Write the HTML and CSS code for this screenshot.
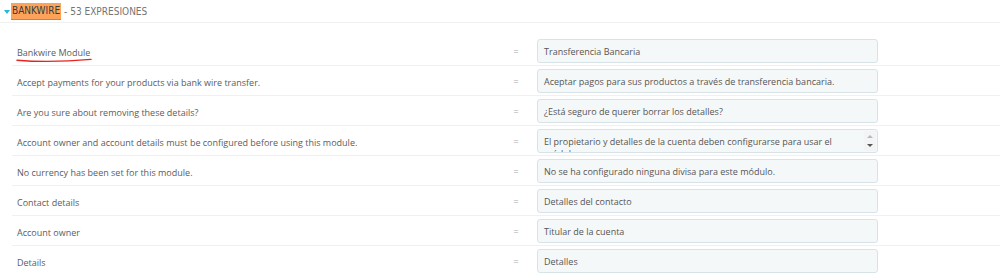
FILE: index.html
```html
<!DOCTYPE html>
<html lang="es">
<head>
<meta charset="utf-8">
<title>Traducciones</title>
<link rel="stylesheet" href="styles.css">
</head>
<body>
<div class="panel">
  <div class="head">
    <span class="caret"></span>
    <a class="mod"><span class="hl">BANKWIRE</span></a>
    <span class="count">- 53 EXPRESIONES</span>
  </div>
  <div class="list">
    <div class="row">
      <div class="label marked">Bankwire Module
        <svg class="scribble" width="80" height="6" viewBox="0 0 80 6"><path d="M1 3.2 C 20 4.8, 50 4.6, 75 2.4" fill="none" stroke="#e8231f" stroke-width="1.4" stroke-linecap="round"/></svg>
      </div>
      <div class="eq">=</div>
      <div class="field">Transferencia Bancaria</div>
    </div>
    <div class="row">
      <div class="label">Accept payments for your products via bank wire transfer.</div>
      <div class="eq">=</div>
      <div class="field">Aceptar pagos para sus productos a través de transferencia bancaria.</div>
    </div>
    <div class="row">
      <div class="label">Are you sure about removing these details?</div>
      <div class="eq">=</div>
      <div class="field">¿Está seguro de querer borrar los detalles?</div>
    </div>
    <div class="row">
      <div class="label">Account owner and account details must be configured before using this module.</div>
      <div class="eq">=</div>
      <div class="field area">
        <div class="area-text">El propietario y detalles de la cuenta deben configurarse para usar el módulo.</div>
        <div class="spin"><span class="up"></span><span class="down"></span></div>
      </div>
    </div>
    <div class="row">
      <div class="label">No currency has been set for this module.</div>
      <div class="eq">=</div>
      <div class="field">No se ha configurado ninguna divisa para este módulo.</div>
    </div>
    <div class="row">
      <div class="label">Contact details</div>
      <div class="eq">=</div>
      <div class="field">Detalles del contacto</div>
    </div>
    <div class="row">
      <div class="label">Account owner</div>
      <div class="eq">=</div>
      <div class="field">Titular de la cuenta</div>
    </div>
    <div class="row">
      <div class="label">Details</div>
      <div class="eq">=</div>
      <div class="field">Detalles</div>
    </div>
  </div>
</div>
</body>
</html>
```
FILE: styles.css
```css
html, body {
  margin: 0;
  padding: 0;
  background: #fff;
}
body {
  font-family: "Open Sans", "Liberation Sans", sans-serif;
  font-size: 9px;
  color: #555;
  overflow: hidden;
}
.panel {
  width: 1000px;
}
.head {
  height: 22px;
  border-bottom: 1px solid #eef0f1;
  display: flex;
  align-items: center;
  padding-left: 4px;
  font-family: "DejaVu Sans", sans-serif;
  font-stretch: condensed;
  font-size: 10px;
  text-transform: uppercase;
}
.caret {
  width: 0;
  height: 0;
  border-left: 3px solid transparent;
  border-right: 3px solid transparent;
  border-top: 4px solid #25b9d7;
  margin-right: 1px;
  margin-top: 1px;
}
.mod {
  display: flex;
  border-bottom: 1px solid #25b9d7;
}
.hl {
  background: #fda359;
  color: #363a41;
  padding: 2px 1px 2px 1px;
  line-height: 12px;
}
.count {
  color: #747474;
  margin-left: 3px;
}
.list {
  padding-top: 13px;
}
.row {
  margin-left: 12px;
  height: 29px;
  border-bottom: 1px solid #eef0f1;
  display: grid;
  grid-template-columns: 487px 24px 350px;
  align-items: center;
  padding-left: 5px;
}
.row:last-child {
  border-bottom: none;
}
.label {
  color: #5c5c5c;
  padding-top: 3px;
}
.marked {
  position: relative;
}
.scribble {
  position: absolute;
  left: -1px;
  top: 14px;
}
.eq {
  text-align: center;
  color: #aaa;
  padding-top: 2px;
}
.field {
  box-sizing: border-box;
  margin-left: 9px;
  width: 341px;
  height: 24px;
  background: #f5f8f9;
  border: 1px solid #d7e3e7;
  border-radius: 3px;
  padding: 2px 6px 0 6px;
  display: flex;
  align-items: center;
  color: #555;
  white-space: nowrap;
  overflow: hidden;
}
.area {
  align-items: flex-start;
  position: relative;
  padding-right: 20px;
  padding-top: 0;
}
.area-text {
  white-space: normal;
  padding-top: 6px;
  line-height: 12px;
  width: 318px;
}
.spin {
  position: absolute;
  right: 1px;
  top: 1px;
  bottom: 1px;
  width: 12px;
  display: flex;
  flex-direction: column;
  align-items: center;
  justify-content: space-between;
  background: #f2f4f5;
}
.up {
  margin-top: 4px;
  width: 0;
  height: 0;
  border-left: 3px solid transparent;
  border-right: 3px solid transparent;
  border-bottom: 3px solid #b8b8b8;
}
.down {
  margin-bottom: 4px;
  width: 0;
  height: 0;
  border-left: 3px solid transparent;
  border-right: 3px solid transparent;
  border-top: 3px solid #555;
}
```
